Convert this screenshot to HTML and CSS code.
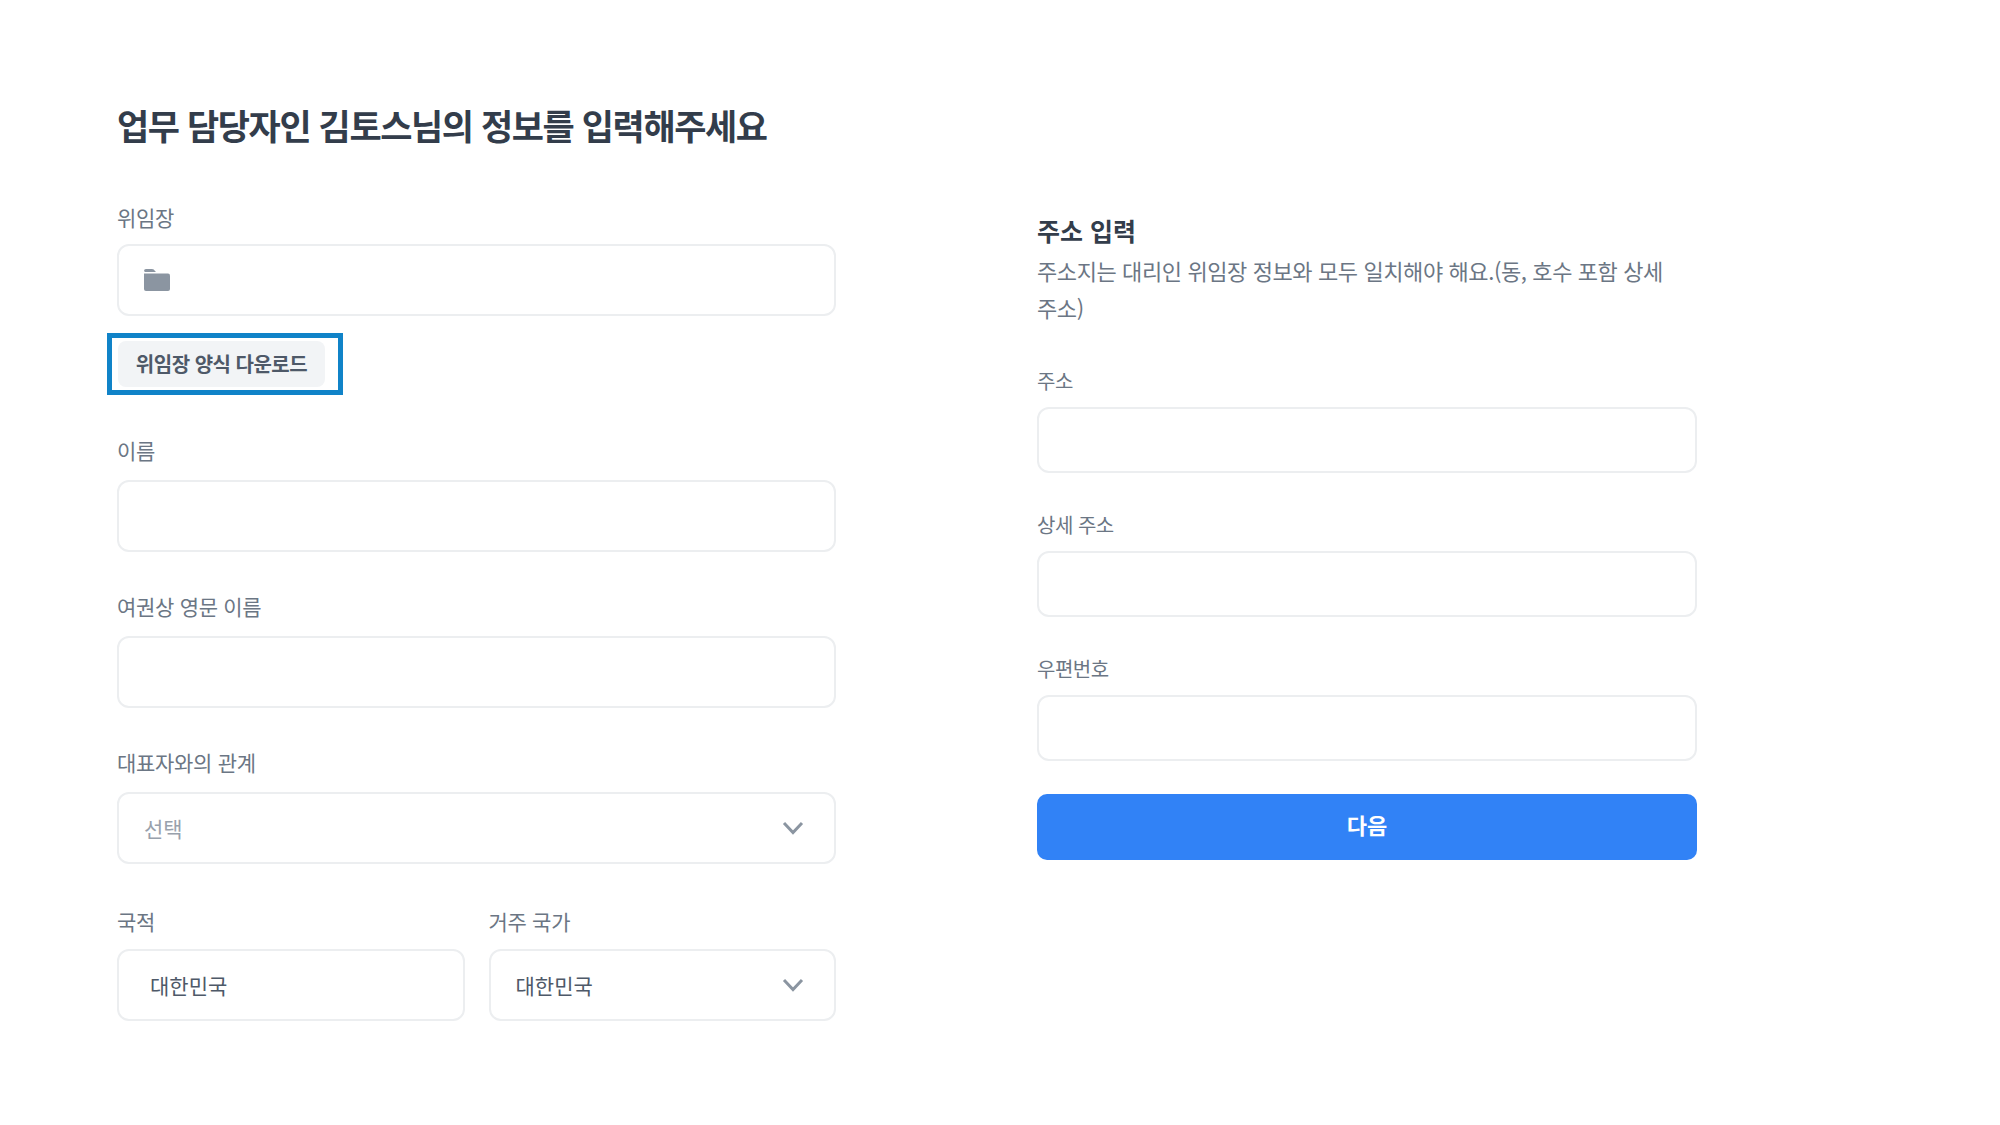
FILE: index.html
```html
<!DOCTYPE html>
<html lang="ko">
  <head>
    <meta charset="UTF-8" />
    <title>정보 입력</title>
    <link rel="stylesheet" href="styles.css">
  </head>
  <body>
    <div class="page">
      <h1 class="title">업무 담당자인 김토스님의 정보를 입력해주세요</h1>

      <div class="columns">
        <div class="col-left">
          <div class="group group-file">
            <div class="label">위임장</div>
            <div class="box box-tall">
              <svg class="folder" viewBox="0 0 26 24" width="26" height="24">
                <path d="M0 3 Q0 1 2 1 H8 Q10 1 11 3 L12 4 H1 Z" fill="#8b95a1" />
                <path d="M0 5.5 H24 Q26 5.5 26 7.5 V21 Q26 23 24 23 H2 Q0 23 0 21 Z" fill="#8b95a1" />
              </svg>
            </div>
            <div class="download-wrap">
              <div class="download">위임장 양식 다운로드</div>
              <div class="highlight"></div>
            </div>
          </div>

          <div class="group">
            <div class="label">이름</div>
            <div class="box box-tall"></div>
          </div>

          <div class="group">
            <div class="label">여권상 영문 이름</div>
            <div class="box box-tall"></div>
          </div>

          <div class="group">
            <div class="label">대표자와의 관계</div>
            <div class="box box-tall select">
              <span class="placeholder">선택</span>
              <svg class="chevron" viewBox="0 0 22 14" width="22" height="14">
                <path d="M2 2 L11 11.5 L20 2" fill="none" stroke="#8b95a1" stroke-width="3" />
              </svg>
            </div>
          </div>

          <div class="pair">
            <div class="pair-item">
              <div class="label">국적</div>
              <div class="box box-tall value-box">대한민국</div>
            </div>
            <div class="pair-item">
              <div class="label">거주 국가</div>
              <div class="box box-tall select">
                <span class="value">대한민국</span>
                <svg class="chevron" viewBox="0 0 22 14" width="22" height="14">
                  <path d="M2 2 L11 11.5 L20 2" fill="none" stroke="#8b95a1" stroke-width="3" />
                </svg>
              </div>
            </div>
          </div>
        </div>

        <div class="col-right">
          <h2 class="sub-title">주소 입력</h2>
          <p class="desc">주소지는 대리인 위임장 정보와 모두 일치해야 해요.(동, 호수 포함 상세 주소)</p>

          <div class="group-r">
            <div class="label">주소</div>
            <div class="box box-short"></div>
          </div>
          <div class="group-r">
            <div class="label">상세 주소</div>
            <div class="box box-short"></div>
          </div>
          <div class="group-r">
            <div class="label">우편번호</div>
            <div class="box box-short"></div>
          </div>

          <button class="next" type="button">다음</button>
        </div>
      </div>
    </div>
  </body>
</html>
```

FILE: styles.css
```css
* {
  box-sizing: border-box;
}

body {
  margin: 0;
  background-color: #ffffff;
  font-family: "Noto Sans CJK KR", "Noto Sans", sans-serif;
}

.page {
  width: 2000px;
  height: 1125px;
  padding: 100px 0 0 117px;
  overflow: hidden;
}

.title {
  margin: 0;
  height: 50px;
  line-height: 50px;
  font-size: 35px;
  font-weight: 700;
  letter-spacing: -1.4px;
  color: #333d4b;
}

.columns {
  display: flex;
  margin-top: 51px;
}

.col-left {
  width: 719px;
}

.col-right {
  width: 660px;
  margin-left: 201px;
  padding-top: 11px;
}

.label {
  height: 32px;
  line-height: 32px;
  font-size: 21px;
  color: #6b7684;
  letter-spacing: -0.3px;
}

.group {
  margin-bottom: 38px;
}

.box {
  background-color: #fff;
  border: 2px solid #eceef0;
  border-radius: 12px;
}

.group .box {
  margin-top: 14px;
}

.group-file .box {
  margin-top: 11px;
}

.pair .box {
  margin-top: 12px;
}

.box-tall {
  height: 72px;
}

.box-short {
  height: 66px;
}

.folder {
  display: block;
  margin: 22px 0 0 25px;
}

.download-wrap {
  position: relative;
  width: 207px;
  margin: 25px 0 47px 1px;
}

.download {
  height: 46px;
  line-height: 46px;
  background-color: #f2f4f6;
  border-radius: 8px;
  text-align: center;
  font-size: 20px;
  font-weight: 700;
  letter-spacing: -0.5px;
  color: #4e5968;
}

.highlight {
  position: absolute;
  top: -8px;
  left: -11px;
  width: 236px;
  height: 62px;
  border: 5px solid #1083c8;
}

.select {
  display: flex;
  align-items: center;
  justify-content: space-between;
  padding: 0 30px 0 25px;
}

.placeholder {
  font-size: 21px;
  color: #98a1ac;
}

.value {
  font-size: 21px;
  color: #4e5968;
}

.value-box {
  display: flex;
  align-items: center;
  padding-left: 31px;
  font-size: 21px;
  color: #4e5968;
}

.pair {
  display: flex;
  gap: 24px;
  margin-top: 41px;
}

.pair-item {
  flex: 1;
}

.sub-title {
  margin: 0;
  height: 36px;
  line-height: 36px;
  font-size: 25px;
  font-weight: 700;
  color: #333d4b;
}

.desc {
  margin: 4px 0 39px;
  width: 640px;
  line-height: 37px;
  font-size: 22px;
  letter-spacing: -0.4px;
  color: #6b7684;
}

.group-r .label {
  font-size: 20px;
  letter-spacing: -0.5px;
}

.group-r .box {
  margin-top: 10px;
}

.group-r + .group-r {
  margin-top: 36px;
}

.next {
  display: block;
  width: 100%;
  height: 66px;
  margin-top: 33px;
  padding-bottom: 7px;
  border: none;
  border-radius: 10px;
  background-color: #3182f6;
  color: #ffffff;
  font-family: inherit;
  font-size: 22px;
  font-weight: 700;
}
```
